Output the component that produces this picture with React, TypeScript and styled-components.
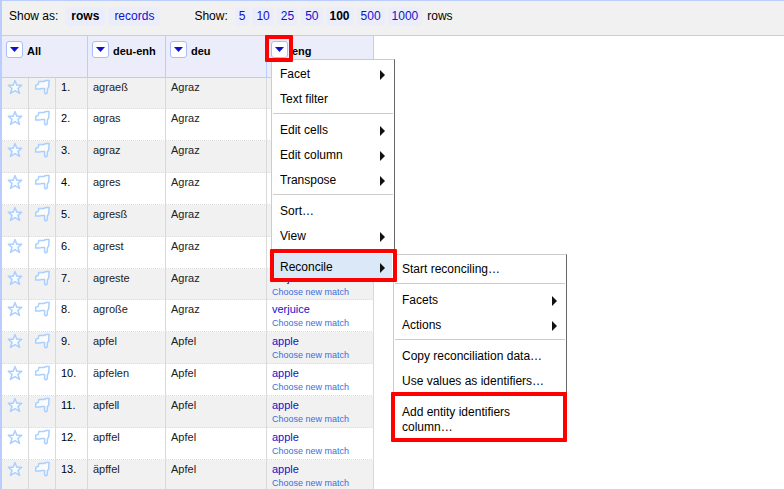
import React from "react";
import styled, { createGlobalStyle, css } from "styled-components";

const GlobalStyle = createGlobalStyle`
  * { box-sizing: border-box; }
  body {
    margin: 0;
    background: #fff;
    color: #000;
    font-family: "Liberation Sans", Arial, sans-serif;
    font-size: 12px;
    overflow: hidden;
  }
  button { font: inherit; color: inherit; }
`;

const Panel = styled.main`
  border-top: 1px solid #bbccff;
  border-left: 2px solid #bbccff;
  height: 100vh;
  overflow: hidden;
`;

const Toolbar = styled.header`
  display: flex;
  align-items: center;
  gap: 34px;
  height: 35px;
  padding: 0 7px 3px;
  line-height: 15px;
  background: #f1f1f1;
  border-bottom: 1px solid #bbccff;
`;

const Choices = styled.div`
  display: flex;
  align-items: center;
  gap: 3px;
`;

const Label = styled.span`
  margin-right: 4px;
`;

const Suffix = styled.span`
  margin-left: 2px;
`;

const choice = css<{ $wide?: boolean }>`
  padding: 2px ${(p) => (p.$wide ? 6 : 4)}px;
  border-radius: 4px;
  background: #ebedfa;
`;

const ChoiceLink = styled.a<{ $wide?: boolean }>`
  ${choice}
  color: #1111cc;
  text-decoration: none;
`;

const CurrentChoice = styled.strong<{ $wide?: boolean }>`
  ${choice}
`;

const Grid = styled.table`
  border-collapse: separate;
  border-spacing: 0;
  table-layout: fixed;
  width: 372px;
  font-size: 11px;
`;

const Col = styled.col<{ $width: number }>`
  width: ${(p) => p.$width}px;
`;

const HeadCell = styled.th`
  height: 42px;
  padding: 5px 4px;
  vertical-align: top;
  text-align: left;
  background: #ebedfa;
  border-right: 1px solid #bbccff;
  border-bottom: 1px solid #bbccff;
`;

const HeadContent = styled.div`
  position: relative;
  display: flex;
  align-items: center;
  gap: 4px;
  white-space: nowrap;
`;

const ColumnName = styled.span`
  padding-top: 2px;
`;

const Row = styled.tr`
  height: 32px;
  &:nth-child(6n + 1) { height: 31px; }
  &:nth-child(odd) { background: #f1f1f1; }
`;

const Cell = styled.td`
  padding: 1px 5px 0;
  line-height: 16px;
  vertical-align: top;
  color: #222;
  border-right: 1px solid #d9d9d9;
  border-bottom: 1px dotted #ddd;
`;

const IconCell = styled(Cell)`
  padding: 1px 0 0 5px;
`;

const IndexCell = styled(Cell)`
  color: #000;
`;

const IconButton = styled.button`
  display: block;
  width: 16px;
  height: 16px;
  padding: 0;
  border: 0;
  background: none;
`;

const MatchLink = styled.a`
  display: block;
  color: #1111cc;
  text-decoration: none;
`;

const ChooseLink = styled.a`
  display: block;
  font-size: 9px;
  line-height: 13px;
  color: #3b6fdc;
  text-decoration: none;
`;

const DropButton = styled.button`
  display: flex;
  align-items: center;
  justify-content: center;
  width: 17px;
  height: 17px;
  padding: 0;
  background: #fff;
  border: 1px solid #aabbff;
  border-radius: 3px;
`;

const Highlight = styled.span`
  position: absolute;
  z-index: 2;
  border: 4px solid #ff0000;
  border-radius: 1px;
  pointer-events: none;
`;

const ButtonHighlight = styled(Highlight)`
  top: -6px;
  left: -6px;
  width: 28px;
  height: 27px;
`;

const ItemHighlight = styled(Highlight)`
  inset: -5px -5px -3px -4px;
`;

const ColumnHighlight = styled(Highlight)`
  inset: -7px -3px -3px -5px;
`;

const MenuBox = styled.div`
  position: absolute;
  z-index: 1;
  padding: 1px 2px;
  background: #fff;
  border: 1px solid #ccc;
  border-right-color: #666;
  border-bottom-color: #666;
  font-size: 12px;
  font-weight: normal;
  white-space: normal;
`;

const MainMenu = styled(MenuBox)`
  top: 18px;
  left: 0;
  width: 124px;
`;

const SubMenu = styled(MenuBox)`
  top: 0;
  left: 119px;
  width: 174px;
`;

const Separator = styled.hr`
  height: 1px;
  margin: 2px -1px 3px;
  border: 0;
  background: #ccc;
`;

const ItemSlot = styled.div`
  position: relative;
`;

const MenuItem = styled.button<{ $active?: boolean }>`
  display: flex;
  align-items: center;
  justify-content: space-between;
  width: 100%;
  padding: 6px 7px 4px 6px;
  line-height: 15px;
  text-align: left;
  color: #000;
  border: 0;
  background: ${(p) => (p.$active ? "#dbe8f8" : "#fff")};
`;

const Star = () => (
  <svg width="16" height="16" viewBox="0 0 16 16" fill="#fff" fillOpacity="0.7" stroke="#a9d0ff" strokeWidth="1.5" strokeLinejoin="round">
    <path d="M8 1.6 9.8 6.2h4.9L11 9.4l1.6 5L8 11.7l-4.6 2.7 1.6-5L1.3 6.2h4.9z" />
  </svg>
);

const Flag = () => (
  <svg width="16" height="16" viewBox="0 0 16 16" fill="#fff" fillOpacity="0.7" stroke="#a9d0ff" strokeWidth="1.5" strokeLinejoin="round">
    <path d="M4.8 2.6 9.5 2.5 12 1.5 15.1 1.5 14.6 8.5 13.5 9.4 13.1 14.2 11.8 14.9 10.6 13.9 10.6 9.6 8 9.4 5.5 10 1.6 9.9 1.8 6.2 4.3 5.4z" />
  </svg>
);

const Down = () => (
  <svg width="9" height="5" viewBox="0 0 9 5">
    <path d="M0 0h9L4.5 5z" fill="#1111cc" />
  </svg>
);

const Right = () => (
  <svg width="5" height="10" viewBox="0 0 5 10">
    <path d="M0 0 5 5 0 10z" fill="#111" />
  </svg>
);

type Entry = { variant: string; lemma: string; match?: string };

const rows: Entry[] = [
  { variant: "agraeß", lemma: "Agraz" },
  { variant: "agras", lemma: "Agraz" },
  { variant: "agraz", lemma: "Agraz" },
  { variant: "agres", lemma: "Agraz" },
  { variant: "agresß", lemma: "Agraz" },
  { variant: "agrest", lemma: "Agraz" },
  { variant: "agreste", lemma: "Agraz", match: "verjuice" },
  { variant: "agroße", lemma: "Agraz", match: "verjuice" },
  { variant: "apfel", lemma: "Apfel", match: "apple" },
  { variant: "äpfelen", lemma: "Apfel", match: "apple" },
  { variant: "apfell", lemma: "Apfel", match: "apple" },
  { variant: "apffel", lemma: "Apfel", match: "apple" },
  { variant: "äpffel", lemma: "Apfel", match: "apple" },
];

const widths = [27, 27, 32, 78, 101, 107];

function Item({ label, arrow, active, children }: {
  label: string;
  arrow?: boolean;
  active?: boolean;
  children?: React.ReactNode;
}) {
  return (
    <ItemSlot>
      <MenuItem type="button" role="menuitem" $active={active} aria-haspopup={arrow ? "menu" : undefined}>
        <span>{label}</span>
        {arrow && <Right />}
      </MenuItem>
      {children}
    </ItemSlot>
  );
}

function ColumnHead({ name, span, children }: { name: string; span?: number; children?: React.ReactNode }) {
  return (
    <HeadCell scope="col" colSpan={span}>
      <HeadContent>
        <DropButton type="button" aria-label={`${name} column menu`}><Down /></DropButton>
        <ColumnName>{name}</ColumnName>
        {children}
      </HeadContent>
    </HeadCell>
  );
}

function EngMenu() {
  return (
    <MainMenu role="menu">
      <Item label="Facet" arrow />
      <Item label="Text filter" />
      <Separator />
      <Item label="Edit cells" arrow />
      <Item label="Edit column" arrow />
      <Item label="Transpose" arrow />
      <Separator />
      <Item label="Sort…" />
      <Item label="View" arrow />
      <Separator />
      <Item label="Reconcile" arrow active>
        <SubMenu role="menu">
          <Item label="Start reconciling…" />
          <Separator />
          <Item label="Facets" arrow />
          <Item label="Actions" arrow />
          <Separator />
          <Item label="Copy reconciliation data…" />
          <Item label="Use values as identifiers…" />
          <Separator />
          <Item label="Add entity identifiers column…">
            <ColumnHighlight />
          </Item>
        </SubMenu>
        <ItemHighlight />
      </Item>
    </MainMenu>
  );
}

export default function App() {
  return (
    <>
      <GlobalStyle />
      <Panel>
        <Toolbar>
          <Choices>
            <Label>Show as:</Label>
            <CurrentChoice $wide>rows</CurrentChoice>
            <ChoiceLink $wide href="#records">records</ChoiceLink>
          </Choices>
          <Choices>
            <Label>Show:</Label>
            {[5, 10, 25, 50, 100, 500, 1000].map((n) =>
              n === 100
                ? <CurrentChoice key={n}>{n}</CurrentChoice>
                : <ChoiceLink key={n} href={`#${n}`}>{n}</ChoiceLink>
            )}
            <Suffix>rows</Suffix>
          </Choices>
        </Toolbar>
        <Grid>
          <colgroup>
            {widths.map((w, i) => <Col key={i} $width={w} />)}
          </colgroup>
          <thead>
            <tr>
              <ColumnHead name="All" span={3} />
              <ColumnHead name="deu-enh" />
              <ColumnHead name="deu" />
              <ColumnHead name="eng">
                <EngMenu />
                <ButtonHighlight />
              </ColumnHead>
            </tr>
          </thead>
          <tbody>
            {rows.map(({ variant, lemma, match }, i) => (
              <Row key={variant}>
                <IconCell><IconButton type="button" aria-label="Star row"><Star /></IconButton></IconCell>
                <IconCell><IconButton type="button" aria-label="Flag row"><Flag /></IconButton></IconCell>
                <IndexCell>{i + 1}.</IndexCell>
                <Cell>{variant}</Cell>
                <Cell>{lemma}</Cell>
                <Cell>
                  {match && (
                    <>
                      <MatchLink href={`#${match}`}>{match}</MatchLink>
                      <ChooseLink href="#choose">Choose new match</ChooseLink>
                    </>
                  )}
                </Cell>
              </Row>
            ))}
          </tbody>
        </Grid>
      </Panel>
    </>
  );
}
